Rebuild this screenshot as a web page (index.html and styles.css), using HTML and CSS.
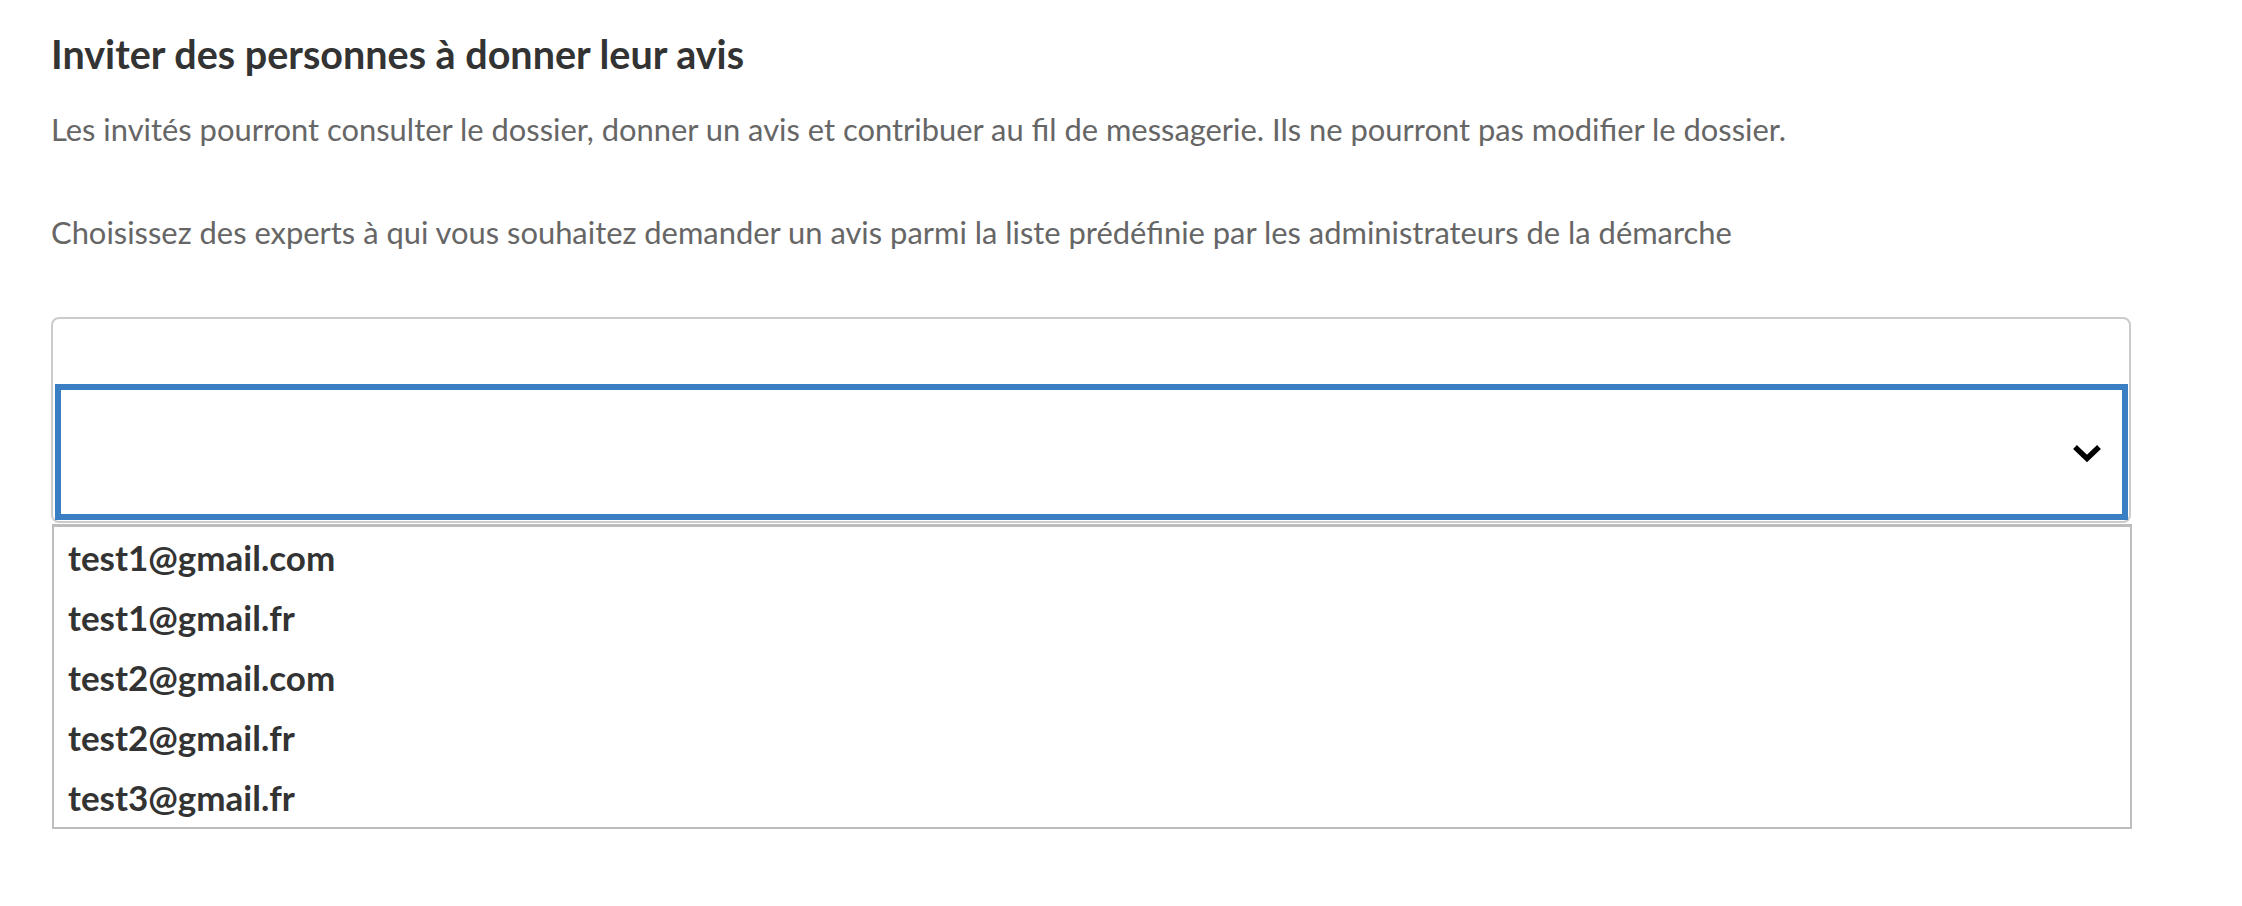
FILE: index.html
```html
<!DOCTYPE html>
<html lang="fr">
<head>
<meta charset="utf-8">
<title>Inviter des personnes à donner leur avis</title>
<link rel="stylesheet" href="styles.css">
</head>
<body>
<main class="page">
  <h2 class="title">Inviter des personnes à donner leur avis</h2>
  <p class="intro">Les invités pourront consulter le dossier, donner un avis et contribuer au fil de messagerie. Ils ne pourront pas modifier le dossier.</p>
  <p class="hint">Choisissez des experts à qui vous souhaitez demander un avis parmi la liste prédéfinie par les administrateurs de la démarche</p>
  <div class="combo">
    <div class="combo-tags"></div>
    <div class="combo-select">
      <svg class="chevron" width="28" height="18" viewBox="0 0 28 18" aria-hidden="true">
        <path d="M4 4 L14 13.5 L24 4" fill="none" stroke="#000" stroke-width="5.5" stroke-linecap="square" stroke-linejoin="miter"/>
      </svg>
    </div>
  </div>
  <ul class="options">
    <li class="option">test1@gmail.com</li>
    <li class="option">test1@gmail.fr</li>
    <li class="option">test2@gmail.com</li>
    <li class="option">test2@gmail.fr</li>
    <li class="option">test3@gmail.fr</li>
  </ul>
</main>
</body>
</html>
```
FILE: styles.css
```css
* { box-sizing: border-box; }
html, body { margin: 0; padding: 0; background: #fff; }
body { font-family: Lato, "Open Sans", sans-serif; color: #333; }
.page { padding: 30px 0 0 51px; width: 2132px; }
.title { margin: 0; font-size: 39.5px; font-weight: 700; line-height: 48px; color: #333; }
.intro, .hint { margin: 0; font-size: 30.9px; line-height: 40px; color: #666; }
.intro { margin-top: 32px; }
.hint { margin-top: 63px; }
.combo { margin-top: 64px; width: 2080px; border: 2px solid #cbcbcb; border-radius: 8px; padding: 65px 1px 1px 2px; background: #fff; }
.combo-tags { height: 0; }
.combo-select { height: 136px; border: 6px solid #3a7ec3; display: flex; align-items: center; justify-content: flex-end; padding: 4px 21px 0 0; }
.chevron { display: block; }
.options { list-style: none; margin: 1px 0 0 1px; padding: 0; width: 2080px; border: 2px solid #bdbdbd; border-top-width: 3px; }
.option { height: 60px; line-height: 60px; padding-left: 14px; font-size: 35px; font-weight: 700; color: #333; }
```
